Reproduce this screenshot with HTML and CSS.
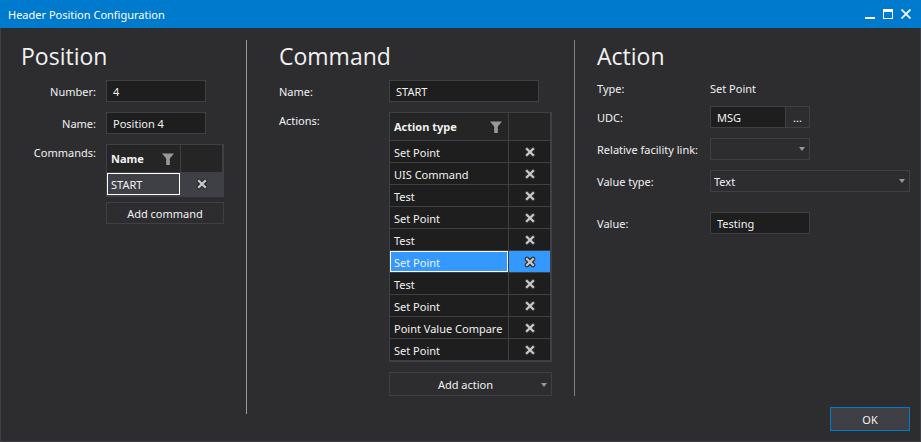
FILE: index.html
```html
<!DOCTYPE html>
<html lang="en">
<head>
<meta charset="utf-8">
<title>Header Position Configuration</title>
<link rel="stylesheet" href="styles.css">
</head>
<body>
<svg class="defs" aria-hidden="true">
  <symbol id="funnel" viewBox="0 0 12 12"><path d="M0 0.5H12L7.8 5.5V12H4.2V5.5Z" fill="#999"/></symbol>
  <symbol id="cross" viewBox="0 0 12 12"><path class="cross-halo" d="M3 3L9 9M9 3L3 9" stroke-width="4.6" stroke-linecap="round"/><path d="M2.2 2.2L9.8 9.8M9.8 2.2L2.2 9.8" stroke="#c8c8c8" stroke-width="2.3"/></symbol>
</svg>
<div class="window">
  <header class="titlebar">
    <span class="caption">Header Position Configuration</span>
    <button class="winbtn" aria-label="Minimize"><svg width="10" height="10"><path d="M0 8H10V10H0Z" fill="#fff"/></svg></button>
    <button class="winbtn" aria-label="Maximize"><svg width="10" height="10"><path fill-rule="evenodd" d="M0 0H10V10H0ZM1 3V9H9V3Z" fill="#fff"/></svg></button>
    <button class="winbtn" aria-label="Close"><svg width="10" height="10"><path d="M0.5 0.5L9.5 9.5M9.5 0.5L0.5 9.5" stroke="#fff" stroke-width="1.7"/></svg></button>
  </header>
  <main class="panels">
    <section class="panel position">
      <h1>Position</h1>
      <div class="form">
        <label for="number">Number:</label>
        <input class="short" id="number" value="4">
        <label for="pname">Name:</label>
        <input class="short" id="pname" value="Position 4">
        <span class="label">Commands:</span>
        <div class="stack">
          <table class="grid commands">
            <thead><tr><th><div class="head">Name<svg width="12" height="12"><use href="#funnel"/></svg></div></th><th class="del"></th></tr></thead>
            <tbody><tr class="selected"><td>START</td><td class="del"><button aria-label="Delete"><svg width="12" height="12"><use href="#cross"/></svg></button></td></tr></tbody>
          </table>
          <button class="btn">Add command</button>
        </div>
      </div>
    </section>
    <section class="panel command">
      <h1>Command</h1>
      <div class="form">
        <label for="cname">Name:</label>
        <input class="medium" id="cname" value="START">
        <span class="label">Actions:</span>
        <div class="stack">
          <table class="grid actions">
            <thead><tr><th><div class="head">Action type<svg width="12" height="12"><use href="#funnel"/></svg></div></th><th class="del"></th></tr></thead>
            <tbody>
              <tr><td>Set Point</td><td class="del"><button aria-label="Delete"><svg width="12" height="12"><use href="#cross"/></svg></button></td></tr>
              <tr><td>UIS Command</td><td class="del"><button aria-label="Delete"><svg width="12" height="12"><use href="#cross"/></svg></button></td></tr>
              <tr><td>Test</td><td class="del"><button aria-label="Delete"><svg width="12" height="12"><use href="#cross"/></svg></button></td></tr>
              <tr><td>Set Point</td><td class="del"><button aria-label="Delete"><svg width="12" height="12"><use href="#cross"/></svg></button></td></tr>
              <tr><td>Test</td><td class="del"><button aria-label="Delete"><svg width="12" height="12"><use href="#cross"/></svg></button></td></tr>
              <tr class="selected"><td>Set Point</td><td class="del"><button aria-label="Delete"><svg width="12" height="12"><use href="#cross"/></svg></button></td></tr>
              <tr><td>Test</td><td class="del"><button aria-label="Delete"><svg width="12" height="12"><use href="#cross"/></svg></button></td></tr>
              <tr><td>Set Point</td><td class="del"><button aria-label="Delete"><svg width="12" height="12"><use href="#cross"/></svg></button></td></tr>
              <tr><td>Point Value Compare</td><td class="del"><button aria-label="Delete"><svg width="12" height="12"><use href="#cross"/></svg></button></td></tr>
              <tr><td>Set Point</td><td class="del"><button aria-label="Delete"><svg width="12" height="12"><use href="#cross"/></svg></button></td></tr>
            </tbody>
          </table>
          <button class="btn drop"><span>Add action</span><svg width="6" height="4"><path d="M0 0H6L3 4Z" fill="#999"/></svg></button>
        </div>
      </div>
    </section>
    <section class="panel action">
      <h1>Action</h1>
      <div class="form">
        <span class="label">Type:</span>
        <span class="label">Set Point</span>
        <label for="udc">UDC:</label>
        <div class="picker"><input id="udc" value="MSG"><button class="btn" aria-label="Browse">...</button></div>
        <label for="link">Relative facility link:</label>
        <div class="select short"><select id="link"><option></option></select><svg width="6" height="4"><path d="M0 0H6L3 4Z" fill="#999"/></svg></div>
        <label for="vtype">Value type:</label>
        <div class="select"><select id="vtype"><option>Text</option></select><svg width="6" height="4"><path d="M0 0H6L3 4Z" fill="#999"/></svg></div>
        <label class="spaced" for="value">Value:</label>
        <input class="short spaced" id="value" value="Testing">
      </div>
    </section>
  </main>
  <footer class="footer"><button class="btn ok">OK</button></footer>
</div>
</body>
</html>
```
FILE: styles.css
```css
* { box-sizing: border-box; }
body { margin: 0; background: #2d2d30; }
body, input, select, button { font: 11px/16px "Noto Sans", "Open Sans", sans-serif; color: #f1f1f1; }
button { padding: 0; border: 0; background: none; }
svg { display: block; flex: none; }
.defs { position: absolute; width: 0; height: 0; }
.window { display: flex; flex-direction: column; min-height: 100vh; border: 1px solid #3f3f46; border-top: 0; }
.titlebar { display: flex; align-items: center; gap: 8px; height: 28px; margin: 0 -1px; padding: 0 10px 0 8px; background: #007acc; color: #fff; }
.caption { flex: 1; padding-top: 2px; }
.winbtn { width: 10px; height: 10px; }
.panels { flex: 1; display: grid; grid-template-columns: 246px 328px 1fr; align-items: start; padding-top: 12px; }
.panel { padding-left: 32px; }
.position { min-height: 374px; padding-left: 20px; border-right: 1px solid #999; }
.command { border-right: 1px solid #808080; }
.action { padding: 0 10px 0 22px; }
h1 { margin: 0 0 8px; font-family: "Open Sans", "Noto Sans", sans-serif; font-size: 23px; line-height: 32px; font-weight: 400; }
.form { display: grid; grid-template-columns: 75px 1fr; column-gap: 10px; row-gap: 10px; align-items: start; }
.position label, .position .label { text-align: right; }
.command .form { grid-template-columns: 100px 1fr; }
.action .form { grid-template-columns: 103px 1fr; }
.label, label { line-height: 18px; white-space: nowrap; }
label { height: 22px; line-height: 24px; }
.action .form > .label { height: 16px; line-height: 18px; }
input, select { width: 100%; height: 22px; padding: 1px 6px 0; border: 1px solid #3f3f46; border-radius: 0; background: #1e1e1e; outline: 0; }
.short { width: 100px; }
.medium { width: 150px; }
.spaced { margin-top: 10px; }
.stack { display: flex; flex-direction: column; }
.grid { table-layout: fixed; border-collapse: separate; border-spacing: 0; border: 1px solid #3f3f46; border-right-width: 2px; background: #1e1e1e; }
.grid th { height: 28px; padding: 0 4px; text-align: left; background: #252526; border-bottom: 1px solid #3f3f46; }
.grid td { height: 22px; padding: 2px 0 0 4px; border-bottom: 1px solid #3f3f46; white-space: nowrap; }
.grid th:first-child, .grid td:first-child { border-right: 1px solid #3f3f46; }
.grid .del { width: 41px; padding: 0; }
.del button { display: block; margin: 0 auto; }
.cross-halo { stroke: #2d2d30; }
.head { display: flex; align-items: center; justify-content: space-between; padding-right: 2px; }
.commands { width: 118px; margin-bottom: 5px; }
.commands .selected td { height: 23px; background: #3f3f46; }
.commands .selected td:first-child, .actions .selected td:first-child { box-shadow: inset 0 0 0 1px #fff; }
.actions { width: 163px; margin-bottom: 10px; }
.actions .selected td { background: #39f; }
.btn { height: 22px; padding-top: 1px; border: 1px solid #3f3f46; background: #2d2d30; }
.position .btn { width: 118px; }
.drop { display: flex; align-items: center; width: 163px; height: 24px; padding-right: 4px; }
.drop span { flex: 1; }
.picker { display: flex; width: 100px; }
.picker input { flex: 1; min-width: 0; }
.picker .btn { width: 25px; margin-left: -1px; }
.select { position: relative; }
.select select { appearance: none; display: block; padding: 1px 3px 0; background: #2d2d30; }
.select svg { position: absolute; right: 5px; top: 9px; pointer-events: none; }
.footer { display: flex; justify-content: flex-end; padding: 0 10px 10px; margin-top: -8px; }
.ok { width: 80px; height: 24px; border-color: #007acc; background: #3f3f46; }
```
